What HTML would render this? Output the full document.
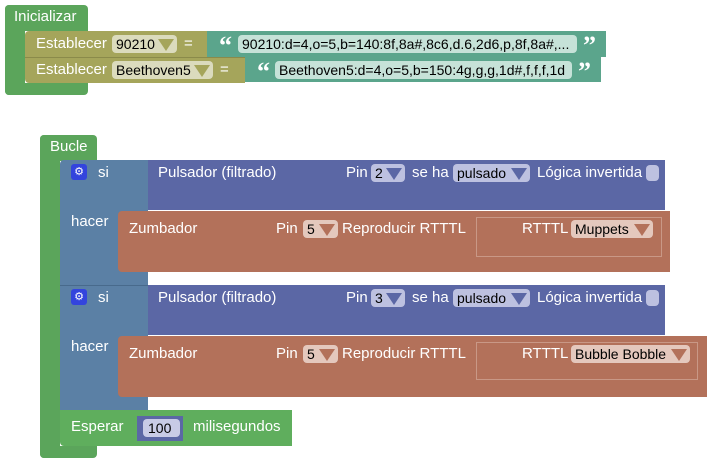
<!DOCTYPE html>
<html><head><style>
body{margin:0;width:714px;height:465px;background:#fff;position:relative;overflow:hidden;font-family:"Liberation Sans",sans-serif;font-size:14px;color:#fff}
.b{position:absolute}
.t{position:absolute;white-space:nowrap;line-height:18px}
.L{font-size:15px}
.f{position:absolute;border-radius:4px;color:#000;line-height:18px;height:18px;padding:0 0 0 4px;white-space:nowrap;box-sizing:border-box;overflow:hidden}
.f .ar{position:absolute;right:3px;top:4px}
.g{background:#5ba55b}
.ol{background:#a5a55b}
.te{background:#5ba58c}
.bl{background:#5b80a5}
.pu{background:#5b67a5}
.zu{background:#b3715a}
.ar{display:inline-block;width:0;height:0;border-left:8px solid transparent;border-right:8px solid transparent;border-top:12px solid}
.q{position:absolute;font-family:"Liberation Serif",serif;font-weight:bold;font-size:26px;line-height:26px}
</style></head><body>
<!-- Inicializar -->
<div class="b g" style="left:5px;top:5px;width:83px;height:26px;border-radius:4px 4px 0 0"></div>
<div class="b g" style="left:5px;top:5px;width:20px;height:90px;border-radius:4px 0 0 4px"></div>
<div class="b g" style="left:5px;top:83px;width:83px;height:12px;border-radius:0 0 4px 4px"></div>
<div class="t L" style="left:14px;top:8px">Inicializar</div>
<div class="b ol" style="left:25px;top:31px;width:185px;height:26px;border-radius:4px 0 0 0"></div>
<div class="b ol" style="left:25px;top:57px;width:220px;height:26px;border-top:1px solid #8a8a4a;box-sizing:border-box;border-radius:0 0 0 4px"></div>
<div class="t L" style="left:36px;top:35px">Establecer</div>
<div class="f" style="left:112px;top:35px;width:65px;background:#dbdbbd">90210<span class="ar" style="color:#a5a55b"></span></div>
<div class="t L" style="left:184px;top:35px">=</div>
<div class="t L" style="left:36px;top:61px">Establecer</div>
<div class="f" style="left:112px;top:61px;width:101px;background:#dbdbbd">Beethoven5<span class="ar" style="color:#a5a55b"></span></div>
<div class="t L" style="left:220px;top:61px">=</div>
<div class="b te" style="left:207px;top:31px;width:399px;height:26px"></div>
<div class="b te" style="left:245px;top:57px;width:356px;height:25px"></div>
<div class="q" style="left:219px;top:33px">“</div>
<div class="f" style="left:238px;top:35px;width:339px;background:#c6e2d8;font-size:14px">90210:d=4,o=5,b=140:8f,8a#,8c6,d.6,2d6,p,8f,8a#,...</div>
<div class="q" style="left:583px;top:33px">”</div>
<div class="q" style="left:257px;top:59px">“</div>
<div class="f" style="left:275px;top:61px;width:297px;background:#c6e2d8;font-size:14px">Beethoven5:d=4,o=5,b=150:4g,g,g,1d#,f,f,f,1d</div>
<div class="q" style="left:578px;top:59px">”</div>

<!-- Bucle -->
<div class="b g" style="left:40px;top:135px;width:57px;height:26px;border-radius:4px 4px 0 0"></div>
<div class="b g" style="left:40px;top:135px;width:20px;height:323px;border-radius:4px 0 0 4px"></div>
<div class="b g" style="left:40px;top:446px;width:57px;height:12px;border-radius:0 0 4px 4px"></div>
<div class="t L" style="left:50px;top:138px">Bucle</div>

<!-- si 1 -->
<div class="b bl" style="left:60px;top:160px;width:88px;height:125px;border-radius:4px 0 0 0"></div>
<div class="b pu" style="left:148px;top:160px;width:517px;height:50px"></div>
<div class="b" style="left:71px;top:164px;width:16px;height:16px;background:#3344dd;border-radius:3px;font-size:11px;text-align:center;line-height:16px">⚙</div>
<div class="t L" style="left:98px;top:164px">si</div>
<div class="t L" style="left:158px;top:164px">Pulsador (filtrado)</div>
<div class="t L" style="left:346px;top:164px">Pin</div>
<div class="f" style="left:371px;top:164px;width:34px;background:#bdc1e0">2<span class="ar" style="color:#5b67a5"></span></div>
<div class="t L" style="left:412px;top:164px">se ha</div>
<div class="f" style="left:453px;top:164px;width:77px;background:#bdc1e0">pulsado<span class="ar" style="color:#5b67a5"></span></div>
<div class="t L" style="left:537px;top:164px">Lógica invertida</div>
<div class="b" style="left:646px;top:165px;width:13px;height:16px;background:#bdc1e0;border-radius:4px"></div>
<div class="t L" style="left:71px;top:213px">hacer</div>
<div class="b zu" style="left:118px;top:211px;width:552px;height:61px;border-radius:4px 0 0 4px"></div>
<div class="t L" style="left:129px;top:220px">Zumbador</div>
<div class="t L" style="left:276px;top:220px">Pin</div>
<div class="f" style="left:303px;top:220px;width:35px;background:#e4c8bd">5<span class="ar" style="color:#b3715a"></span></div>
<div class="t L" style="left:342px;top:220px">Reproducir RTTTL</div>
<div class="b" style="left:476px;top:217px;width:184px;height:38px;border:1px solid #c99886"></div>
<div class="t L" style="left:522px;top:220px">RTTTL</div>
<div class="f" style="left:571px;top:220px;width:82px;background:#e4c8bd">Muppets<span class="ar" style="color:#b3715a"></span></div>

<!-- si 2 -->
<div class="b bl" style="left:60px;top:285px;width:88px;height:125px;border-top:1px solid #486a8c;box-sizing:border-box"></div>
<div class="b pu" style="left:148px;top:285px;width:517px;height:50px"></div>
<div class="b" style="left:71px;top:289px;width:16px;height:16px;background:#3344dd;border-radius:3px;font-size:11px;text-align:center;line-height:16px">⚙</div>
<div class="t L" style="left:98px;top:289px">si</div>
<div class="t L" style="left:158px;top:289px">Pulsador (filtrado)</div>
<div class="t L" style="left:346px;top:289px">Pin</div>
<div class="f" style="left:371px;top:289px;width:34px;background:#bdc1e0">3<span class="ar" style="color:#5b67a5"></span></div>
<div class="t L" style="left:412px;top:289px">se ha</div>
<div class="f" style="left:453px;top:289px;width:77px;background:#bdc1e0">pulsado<span class="ar" style="color:#5b67a5"></span></div>
<div class="t L" style="left:537px;top:289px">Lógica invertida</div>
<div class="b" style="left:646px;top:290px;width:13px;height:16px;background:#bdc1e0;border-radius:4px"></div>
<div class="t L" style="left:71px;top:338px">hacer</div>
<div class="b zu" style="left:118px;top:336px;width:589px;height:61px;border-radius:4px 0 0 4px"></div>
<div class="t L" style="left:129px;top:345px">Zumbador</div>
<div class="t L" style="left:276px;top:345px">Pin</div>
<div class="f" style="left:303px;top:345px;width:35px;background:#e4c8bd">5<span class="ar" style="color:#b3715a"></span></div>
<div class="t L" style="left:342px;top:345px">Reproducir RTTTL</div>
<div class="b" style="left:476px;top:342px;width:220px;height:36px;border:1px solid #c99886"></div>
<div class="t L" style="left:522px;top:345px">RTTTL</div>
<div class="f" style="left:571px;top:345px;width:119px;background:#e4c8bd">Bubble Bobble<span class="ar" style="color:#b3715a"></span></div>

<!-- Esperar -->
<div class="b g" style="left:60px;top:410px;width:232px;height:36px;border-radius:0 0 0 4px;background:#5fae5d"></div>
<div class="t L" style="left:71px;top:418px">Esperar</div>
<div class="b pu" style="left:137px;top:416px;width:46px;height:25px"></div>
<div class="f" style="left:143px;top:419px;width:37px;background:#c8cbe6;padding-left:5px">100</div>
<div class="t L" style="left:193px;top:418px">milisegundos</div>
</body></html>
